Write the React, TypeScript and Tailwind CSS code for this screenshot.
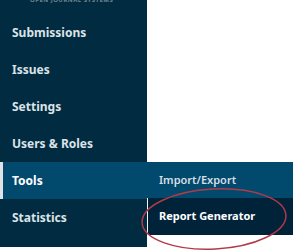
import React from "react";

const items = ["Submissions", "Issues", "Settings", "Users & Roles", "Tools", "Statistics"];

export default function App() {
  return (
    <div
      className="relative w-[300px] h-[250px] overflow-hidden bg-white"
      style={{ fontFamily: '"Noto Sans", "Open Sans", sans-serif' }}
    >
      <div className="relative w-[147px] h-full bg-[#002b40]">
        {/* logo strip, cut off at the top */}
        <div className="h-[17px] -mt-[3px] pl-[30px] text-[6px] font-bold tracking-[0.08em] text-[#6f8794] leading-none">
          OPEN JOURNAL SYSTEMS
        </div>
        <nav className="flex flex-col">
          {items.map((item) => {
            const active = item === "Tools";
            return (
              <div
                key={item}
                className={
                  active
                    ? "relative h-[37px] flex items-center pl-[9px] border-l-[3px] border-[#dfe3e6] bg-[#024a6d] text-[12px] font-bold text-white"
                    : "h-[37px] flex items-center pl-[12px] text-[12px] font-bold text-[#dce3e8]"
                }
              >
                {item}
                {active && (
                  <div className="absolute left-[144px] top-0 w-[146px] flex flex-col">
                    <div className="h-[36px] flex items-center pl-[12px] bg-[#024a6d] text-[11px] font-semibold text-[#d6dfe5]">
                      Import/Export
                    </div>
                    <div className="h-[37px] flex items-center pl-[11px] border-l border-[#f2f4f5] bg-[#00233a] text-[11px] font-bold text-white">
                      Report Generator
                    </div>
                  </div>
                )}
              </div>
            );
          })}
        </nav>
      </div>
      {/* highlight circle */}
      <svg className="absolute left-0 top-0" width="300" height="250" viewBox="0 0 300 250">
        <ellipse
          cx="214"
          cy="219"
          rx="72"
          ry="30"
          fill="none"
          stroke="#b23a48"
          strokeWidth="1.5"
          transform="rotate(-3 214 219)"
        />
      </svg>
    </div>
  );
}
